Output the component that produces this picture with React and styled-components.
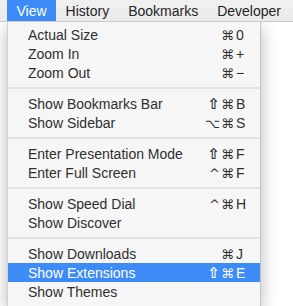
import React from "react";
import styled, { createGlobalStyle } from "styled-components";

const GlobalStyle = createGlobalStyle`
    html, body {
        margin: 0;
        padding: 0;
        background: #ffffff;
    }
    body {
        font-family: "Liberation Sans", Arial, sans-serif;
        width: 293px;
        height: 306px;
        overflow: hidden;
    }
`;

const Screen = styled.div`
    display: flex;
    flex-direction: column;
    width: 293px;
    height: 306px;
    overflow: hidden;
`;

const MenuBar = styled.div`
    display: flex;
    align-items: stretch;
    height: 21px;
    padding-left: 7px;
    background: linear-gradient(#f1f1f1, #e9e9e9);
    border-bottom: 1px solid #cbcbcb;
    position: relative;
    z-index: 2;
`;

const BarItem = styled.div`
    display: flex;
    align-items: center;
    padding: 0 9.5px;
    font-size: 14px;
    color: ${(p) => (p.$active ? "#ffffff" : "#262626")};
    background: ${(p) => (p.$active ? "#3d8bf6" : "transparent")};
    white-space: nowrap;
`;

const Body = styled.div`
    flex: 1;
    display: flex;
    padding-left: 7px;
    min-height: 0;
`;

const Dropdown = styled.div`
    width: 254px;
    padding-top: 3px;
    background: #f6f6f6;
    border-right: 1px solid #c4c4c4;
    border-left: 1px solid #d0d0d0;
    box-shadow: 0 6px 16px rgba(0, 0, 0, 0.28);
    box-sizing: border-box;
`;

const Item = styled.div`
    display: flex;
    align-items: center;
    height: 19px;
    padding-left: 20px;
    font-size: 14px;
    color: ${(p) => (p.$selected ? "#ffffff" : "#2f2f2f")};
    background: ${(p) => (p.$selected ? "#3d8bf6" : "transparent")};
`;

const Label = styled.span`
    flex: 1;
    white-space: nowrap;
`;

const Shortcut = styled.span`
    display: flex;
    align-items: baseline;
    width: 46px;
    margin-right: 12px;
    font-family: "DejaVu Sans", "Liberation Sans", sans-serif;
    font-size: 13px;
`;

const Modifiers = styled.span`
    flex: 1;
    text-align: right;
    letter-spacing: 1px;
`;

const Shift = styled.span`
    font-size: 15px;
    font-weight: bold;
`;

const Key = styled.span`
    width: 12px;
    padding-left: 1px;
    font-family: "Liberation Sans", Arial, sans-serif;
    font-size: 14px;
`;

const Separator = styled.div`
    height: 12px;
    display: flex;
    align-items: center;

    &::after {
        content: "";
        flex: 1;
        height: 2px;
        background: #e3e3e3;
    }
`;

const SECTIONS = [
    [
        ["Actual Size", "⌘", "0"],
        ["Zoom In", "⌘", "+"],
        ["Zoom Out", "⌘", "−"],
    ],
    [
        ["Show Bookmarks Bar", "⇧⌘", "B"],
        ["Show Sidebar", "⌥⌘", "S"],
    ],
    [
        ["Enter Presentation Mode", "⇧⌘", "F"],
        ["Enter Full Screen", "^⌘", "F"],
    ],
    [
        ["Show Speed Dial", "^⌘", "H"],
        ["Show Discover"],
    ],
    [
        ["Show Downloads", "⌘", "J"],
        ["Show Extensions", "⇧⌘", "E"],
        ["Show Themes"],
    ],
];

const renderMods = (mods) =>
    mods.split("").map((ch, i) =>
        ch === "⇧" ? <Shift key={i}>{ch}</Shift> : <span key={i}>{ch}</span>
    );

const App = () => {
    return (
        <Screen>
            <GlobalStyle />
            <MenuBar>
                <BarItem $active>View</BarItem>
                <BarItem>History</BarItem>
                <BarItem>Bookmarks</BarItem>
                <BarItem>Developer</BarItem>
            </MenuBar>
            <Body>
                <Dropdown>
                    {SECTIONS.map((section, i) => (
                        <React.Fragment key={i}>
                            {i > 0 && <Separator />}
                            {section.map(([label, mods, key]) => (
                                <Item
                                    key={label}
                                    $selected={label === "Show Extensions"}
                                >
                                    <Label>{label}</Label>
                                    {key && (
                                        <Shortcut>
                                            <Modifiers>{renderMods(mods)}</Modifiers>
                                            <Key>{key}</Key>
                                        </Shortcut>
                                    )}
                                </Item>
                            ))}
                        </React.Fragment>
                    ))}
                </Dropdown>
            </Body>
        </Screen>
    );
};

export default App;
